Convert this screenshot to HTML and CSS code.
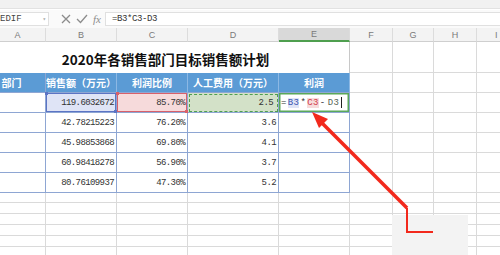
FILE: index.html
```html
<!DOCTYPE html>
<html lang="zh-CN">
<head>
    <meta charset="UTF-8">
    <title>销售额计划</title>
    <link rel="stylesheet" href="styles.css">
</head>
<body>
    <div class="app">
        <div class="ribbon"></div>

        <div class="formula-bar">
            <div class="name-box">
                <span>EDIF</span>
                <span class="caret">▾</span>
            </div>
            <div class="fx-icons">
                <svg width="10" height="10" viewBox="0 0 10 10"><path d="M1 1 L9 9 M9 1 L1 9" stroke="#8c8c8c" stroke-width="1.3" fill="none"/></svg>
                <svg width="12" height="10" viewBox="0 0 12 10"><path d="M1 5 L4.5 8.5 L11 1" stroke="#8c8c8c" stroke-width="1.3" fill="none"/></svg>
                <span class="fx">fx</span>
            </div>
            <div class="formula-input">=B3*C3-D3</div>
        </div>

        <div class="sheet">
            <!-- column letters -->
            <div class="col-head">A</div>
            <div class="col-head">B</div>
            <div class="col-head">C</div>
            <div class="col-head">D</div>
            <div class="col-head active">E</div>
            <div class="col-head">F</div>
            <div class="col-head">G</div>
            <div class="col-head">H</div>
            <div class="col-head last">I</div>

            <!-- row 1: title -->
            <div class="title">2020年各销售部门目标销售额计划</div>
            <div class="cell"></div>
            <div class="cell"></div>
            <div class="cell"></div>
            <div class="cell"></div>

            <!-- row 2: headers -->
            <div class="th">部门</div>
            <div class="th">销售额（万元）</div>
            <div class="th">利润比例</div>
            <div class="th">人工费用（万元）</div>
            <div class="th">利润</div>
            <div class="cell"></div>
            <div class="cell"></div>
            <div class="cell"></div>
            <div class="cell"></div>

            <!-- row 3 -->
            <div class="td"></div>
            <div class="td num ref-b">119.6032672</div>
            <div class="td num ref-c">85.70%</div>
            <div class="td num ref-d">2.5</div>
            <div class="td editing">=<span class="tok-b">B3</span>*<span class="tok-c">C3</span>-<span class="tok-d">D3</span><span class="cursor"></span></div>
            <div class="cell"></div>
            <div class="cell"></div>
            <div class="cell"></div>
            <div class="cell"></div>

            <!-- row 4 -->
            <div class="td"></div>
            <div class="td num">42.78215223</div>
            <div class="td num">76.20%</div>
            <div class="td num">3.6</div>
            <div class="td"></div>
            <div class="cell"></div>
            <div class="cell"></div>
            <div class="cell"></div>
            <div class="cell"></div>

            <!-- row 5 -->
            <div class="td"></div>
            <div class="td num">45.98853868</div>
            <div class="td num">69.80%</div>
            <div class="td num">4.1</div>
            <div class="td"></div>
            <div class="cell"></div>
            <div class="cell"></div>
            <div class="cell"></div>
            <div class="cell"></div>

            <!-- row 6 -->
            <div class="td"></div>
            <div class="td num">60.98418278</div>
            <div class="td num">56.90%</div>
            <div class="td num">3.7</div>
            <div class="td"></div>
            <div class="cell"></div>
            <div class="cell"></div>
            <div class="cell"></div>
            <div class="cell"></div>

            <!-- row 7 -->
            <div class="td"></div>
            <div class="td num">80.76109937</div>
            <div class="td num">47.30%</div>
            <div class="td num">5.2</div>
            <div class="td"></div>
            <div class="cell"></div>
            <div class="cell"></div>
            <div class="cell"></div>
            <div class="cell"></div>

            <!-- empty rows -->
            <div class="cell"></div><div class="cell"></div><div class="cell"></div><div class="cell"></div><div class="cell"></div><div class="cell"></div><div class="cell"></div><div class="cell"></div><div class="cell"></div>
            <div class="cell"></div><div class="cell"></div><div class="cell"></div><div class="cell"></div><div class="cell"></div><div class="cell"></div><div class="cell"></div><div class="cell"></div><div class="cell"></div>
            <div class="cell"></div><div class="cell"></div><div class="cell"></div><div class="cell"></div><div class="cell"></div><div class="cell"></div><div class="cell"></div><div class="cell"></div><div class="cell"></div>
            <div class="cell"></div><div class="cell"></div><div class="cell"></div><div class="cell"></div><div class="cell"></div><div class="cell"></div><div class="cell"></div><div class="cell"></div><div class="cell"></div>
            <div class="cell"></div><div class="cell"></div><div class="cell"></div><div class="cell"></div><div class="cell"></div><div class="cell"></div><div class="cell"></div><div class="cell"></div><div class="cell"></div>
            <div class="cell"></div><div class="cell"></div><div class="cell"></div><div class="cell"></div><div class="cell"></div><div class="cell"></div><div class="cell"></div><div class="cell"></div><div class="cell"></div>
        </div>

        <!-- annotation arrow drawn over the sheet -->
        <svg class="annotation" width="500" height="255" viewBox="0 0 500 255">
            <rect x="392" y="215" width="76" height="40" fill="#f3f3f3"/>
            <path d="M433 232 L407 232 L407 208" stroke="#f2291c" stroke-width="2" fill="none"/>
            <path d="M407 208 L322 123" stroke="#f2291c" stroke-width="3.5" fill="none"/>
            <path d="M312 112 L328 119 L319 128 Z" fill="#f2291c"/>
        </svg>
    </div>
</body>
</html>
```

FILE: styles.css
```css
:root {
    --grid: #dadada;
    --table-line: #8ea6d3;
    --head-blue: #5b9bd5;
    --green: #4f9f4f;
}

* {
    margin: 0;
    padding: 0;
    box-sizing: border-box;
}

body {
    background-color: white;
    font-family: "Noto Sans CJK SC", "Liberation Sans", sans-serif;
    color: #333;
    overflow: hidden;
}

.app {
    position: relative;
    width: 500px;
    height: 255px;
    overflow: hidden;
}

.ribbon {
    height: 9px;
    background-color: #f1f1f1;
    border-bottom: 1px solid #e2e2e2;
}

.formula-bar {
    display: flex;
    align-items: center;
    height: 18px;
    margin-top: 1px;
    background-color: #fafafa;
}

.name-box {
    display: flex;
    align-items: center;
    justify-content: space-between;
    width: 49px;
    height: 14px;
    background-color: white;
    border: 1px solid #e0e0e0;
    border-left: none;
    padding-right: 2px;
    font-family: "Liberation Mono", monospace;
    font-size: 9px;
    color: #444;
}

.caret {
    font-size: 6px;
    color: #aaa;
}

.fx-icons {
    display: flex;
    align-items: center;
    gap: 5px;
    padding-left: 12px;
    width: 56px;
}

.fx {
    font-family: "Liberation Serif", serif;
    font-style: italic;
    font-size: 11px;
    color: #8c8c8c;
}

.formula-input {
    flex: 1;
    height: 14px;
    background-color: white;
    border: 1px solid #e0e0e0;
    border-right: none;
    padding-left: 6px;
    font-family: "Liberation Mono", monospace;
    font-size: 9px;
    line-height: 12px;
    letter-spacing: -0.4px;
    color: #333;
}

.sheet {
    display: grid;
    grid-template-columns: 68px 71px 71px 91px 71px 43px 41px 43px 60px;
    grid-template-rows: 14px 31px 20px 20px 20px 20px 20px 20px 10px 11px 11px 11px 11px 11px;
    margin-left: -22px;
}

.col-head {
    display: flex;
    align-items: center;
    justify-content: center;
    background-color: #f3f3f3;
    border-right: 1px solid #dcdcdc;
    border-bottom: 1px solid #cfcfcf;
    font-family: "Liberation Sans", sans-serif;
    font-size: 9px;
    color: #7a7a7a;
}

.col-head:first-child {
    padding-left: 12px;
}

.col-head.last {
    justify-content: flex-start;
    padding-left: 18px;
}

.col-head.active {
    background-color: #d9d9d9;
    border-bottom: 2px solid var(--green);
}

.cell {
    border-right: 1px solid var(--grid);
    border-bottom: 1px solid var(--grid);
}

.title {
    grid-column: span 5;
    display: flex;
    align-items: center;
    justify-content: center;
    padding-top: 2px;
    padding-left: 4px;
    border-right: 1px solid #c8c8c8;
    font-size: 13.5px;
    font-weight: bold;
    color: #111;
}

.th {
    display: flex;
    align-items: center;
    justify-content: center;
    background-color: var(--head-blue);
    border-right: 1px solid #8cb8e4;
    border-bottom: 1px solid var(--table-line);
    font-size: 10px;
    font-weight: bold;
    color: white;
}

.th:nth-child(15) {
    border-right: 1px solid var(--table-line);
}

.td {
    position: relative;
    display: flex;
    align-items: center;
    border-right: 1px solid var(--table-line);
    border-bottom: 1px solid var(--table-line);
    background-color: white;
}

.num {
    justify-content: flex-end;
    padding-right: 2px;
    font-family: "Liberation Mono", monospace;
    font-size: 9px;
    letter-spacing: -0.6px;
    color: #333;
}

.ref-b {
    background-color: #dfe4f6;
    box-shadow: inset 0 0 0 1px #5b74c4;
}

.ref-c {
    background-color: #f6dadb;
    box-shadow: inset 0 0 0 1px #d8606a;
}

.ref-b::before,
.ref-b::after,
.ref-c::before,
.ref-c::after {
    content: "";
    position: absolute;
    width: 3px;
    height: 3px;
}

.ref-b::before,
.ref-c::before {
    top: -1px;
    left: -1px;
}

.ref-b::after,
.ref-c::after {
    bottom: -1px;
    right: -1px;
}

.ref-b::before,
.ref-b::after {
    background-color: #5b74c4;
}

.ref-c::before,
.ref-c::after {
    background-color: #d8606a;
}

.ref-d {
    background-color: #d3e1c8;
    outline: 1px dashed var(--green);
    outline-offset: -2px;
    padding-right: 5px;
}

.editing {
    box-shadow: inset 0 0 0 1.5px #5aa85a;
    padding-left: 2px;
    font-family: "Liberation Mono", monospace;
    font-size: 9px;
    letter-spacing: 0.4px;
    color: #333;
}

.tok-b {
    background-color: #dfe4f6;
    color: #3a55b0;
    margin: 0 1px;
}

.tok-c {
    background-color: #f6dadb;
    color: #d23c48;
    margin: 0 1px;
}

.tok-d {
    color: #556655;
    margin-left: 2px;
}

.cursor {
    display: inline-block;
    width: 1px;
    height: 11px;
    margin-left: 2px;
    background-color: #222;
}

.annotation {
    position: absolute;
    top: 0;
    left: 0;
    pointer-events: none;
}
```
